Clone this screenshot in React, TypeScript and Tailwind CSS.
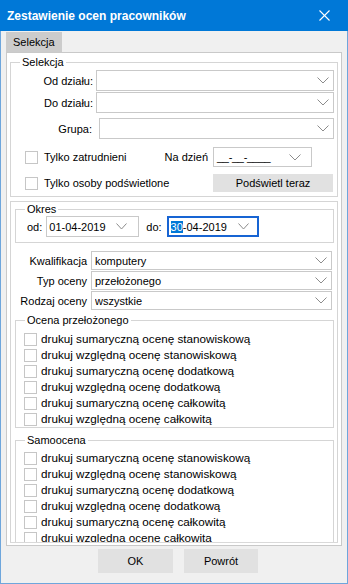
import React from "react";

const Chevron = ({ w = 12 }: { w?: number }) => (
  <svg width={w} height={7} viewBox={`0 0 ${w} 7`} className="shrink-0">
    <polyline points={`0.5,0.5 ${w / 2},6 ${w - 0.5},0.5`} fill="none" stroke="#8c8c8c" strokeWidth="1" />
  </svg>
);

const Check = () => <div className="w-[13px] h-[13px] shrink-0 border border-[#c6c6c6] bg-white" />;

const Combo = ({ value = "", cls = "" }: { value?: string; cls?: string }) => (
  <div className={`flex items-center border border-[#c9c9c9] bg-white pl-[3px] pr-[4px] ${cls}`}>
    <span className="flex-1 truncate">{value}</span>
    <Chevron />
  </div>
);

const items = [
  "drukuj sumaryczną ocenę stanowiskową",
  "drukuj względną ocenę stanowiskową",
  "drukuj sumaryczną ocenę dodatkową",
  "drukuj względną ocenę dodatkową",
  "drukuj sumaryczną ocenę całkowitą",
  "drukuj względną ocenę całkowitą",
];

const CheckList = () => (
  <div className="flex flex-col">
    {items.map((t) => (
      <div key={t} className="h-[16px] flex items-center pl-[8px] gap-[4px]">
        <Check />
        <span className="whitespace-nowrap text-[11.7px]">{t}</span>
      </div>
    ))}
  </div>
);

export default function App() {
  return (
    <div
      className="w-[348px] h-[584px] flex flex-col bg-[#f0f0f0] text-[11px] leading-[14px] text-black"
      style={{ fontFamily: '"Liberation Sans", Arial, sans-serif' }}
    >
      {/* title bar */}
      <div className="h-[31px] shrink-0 bg-[#0078d7] flex items-center pl-[7px] pr-[18px]">
        <span className="flex-1 text-white font-bold text-[12px]">Zestawienie ocen pracowników</span>
        <svg width="11" height="11" viewBox="0 0 11 11">
          <line x1="0.5" y1="0.5" x2="10.5" y2="10.5" stroke="white" strokeWidth="1.1" />
          <line x1="10.5" y1="0.5" x2="0.5" y2="10.5" stroke="white" strokeWidth="1.1" />
        </svg>
      </div>

      {/* body */}
      <div className="flex-1 flex flex-col border-l border-r border-b border-[#6ea6dc] px-[5px]">
        {/* tab */}
        <div className="mt-[1px] flex">
          <div className="h-[20px] bg-[#cccccc] px-[7px] flex items-center">Selekcja</div>
        </div>

        {/* panel */}
        <div className="h-[494px] border border-[#c9c9c9] bg-white flex flex-col pt-[2px] px-[3px] pb-[2px]">
          <div className="flex-1 overflow-hidden border-b border-[#d9d9d9] flex flex-col">
            {/* Selekcja group */}
            <fieldset className="border border-[#d5d5d5] pb-[4px] pr-[3px]">
              <legend className="ml-[9px] px-[2px] leading-[14px]">Selekcja</legend>
              <div className="mt-[1px] flex flex-col gap-[1px]">
                <div className="flex items-center">
                  <div className="w-[82px] text-right">Od działu:</div>
                  <Combo cls="ml-[3px] flex-1 h-[21px]" />
                </div>
                <div className="flex items-center">
                  <div className="w-[82px] text-right">Do działu:</div>
                  <Combo cls="ml-[3px] flex-1 h-[21px]" />
                </div>
              </div>
              <div className="mt-[5px] flex items-center">
                <div className="w-[81px] text-right">Grupa:</div>
                <Combo cls="ml-[7px] flex-1 h-[21px]" />
              </div>
              <div className="mt-[8px] flex items-center h-[20px]">
                <div className="w-[202px] flex items-center pl-[14px] pr-[5px]">
                  <Check />
                  <span className="ml-[6px] flex-1">Tylko zatrudnieni</span>
                  <span>Na dzień</span>
                </div>
                <div className="w-[99px] h-[20px] border border-[#c9c9c9] flex items-center pl-[3px] pr-[10px]">
                  <span className="flex-1 tracking-[-0.3px]">__-__-____</span>
                  <Chevron />
                </div>
              </div>
              <div className="mt-[7px] flex items-center h-[18px]">
                <div className="w-[202px] flex items-center pl-[14px]">
                  <Check />
                  <span className="ml-[6px]">Tylko osoby podświetlone</span>
                </div>
                <div className="w-[120px] h-[18px] bg-[#e1e1e1] flex items-center justify-center">
                  Podświetl teraz
                </div>
              </div>
            </fieldset>

            {/* second container */}
            <div className="mt-[4px] flex-1 border-l border-r border-t border-[#d5d5d5] flex flex-col pl-[4px] pr-[3px]">
              {/* Okres */}
              <fieldset className="border border-[#d5d5d5] pb-[5px]">
                <legend className="ml-[9px] px-[2px] leading-[14px]">Okres</legend>
                <div className="flex items-center h-[21px] pl-[11px]">
                  <span>od:</span>
                  <div className="ml-[4px] w-[93px] h-[21px] border border-[#c9c9c9] flex items-center pl-[2px] pr-[11px]">
                    <span className="flex-1">01-04-2019</span>
                    <Chevron w={11} />
                  </div>
                  <span className="ml-[7px]">do:</span>
                  <div className="ml-[5px] w-[92px] h-[21px] border-2 border-[#1764d3] flex items-center pl-[2px] pr-[8px]">
                    <span className="flex-1">
                      <span className="bg-[#0078d7] text-white">30</span>-04-2019
                    </span>
                    <Chevron w={11} />
                  </div>
                </div>
              </fieldset>

              {/* combos */}
              <div className="mt-[8px] flex flex-col gap-[1px] pr-[2px]">
                {[
                  ["Kwalifikacja", "komputery"],
                  ["Typ oceny", "przełożonego"],
                  ["Rodzaj oceny", "wszystkie"],
                ].map(([l, v]) => (
                  <div key={l} className="flex items-center">
                    <div className="w-[72px] text-right">{l}</div>
                    <Combo value={v} cls="ml-[4px] flex-1 h-[19px]" />
                  </div>
                ))}
              </div>

              {/* Ocena przełożonego */}
              <fieldset className="mt-[3px] border border-[#d5d5d5] pt-[4px]">
                <legend className="ml-[9px] px-[2px] leading-[14px]">Ocena przełożonego</legend>
                <CheckList />
              </fieldset>

              {/* Samoocena */}
              <fieldset className="mt-[5px] border border-[#d5d5d5] pt-[3px]">
                <legend className="ml-[9px] px-[2px] leading-[14px]">Samoocena</legend>
                <CheckList />
              </fieldset>
            </div>
          </div>
        </div>

        {/* buttons */}
        <div className="mt-[3px] flex pl-[92px] gap-[11px]">
          <div className="w-[75px] h-[24px] bg-[#e1e1e1] flex items-center justify-center">OK</div>
          <div className="w-[74px] h-[24px] bg-[#e1e1e1] flex items-center justify-center">Powrót</div>
        </div>
      </div>
    </div>
  );
}
